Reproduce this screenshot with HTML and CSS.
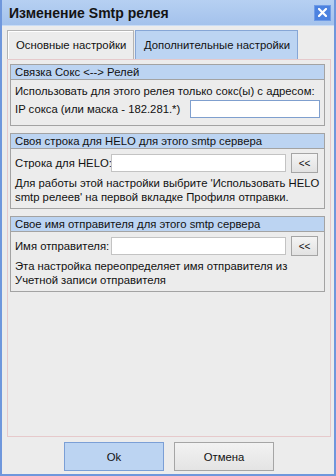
FILE: index.html
```html
<!DOCTYPE html>
<html lang="ru">
  <head>
    <meta charset="UTF-8" />
    <meta name="viewport" content="width=device-width, initial-scale=1.0" />
    <title>Изменение Smtp релея</title>
    <link rel="stylesheet" href="styles.css">
  </head>
  <body>
    <div class="window">
      <header class="titlebar">
        <h1>Изменение Smtp релея</h1>
        <button class="close" aria-label="Закрыть">
          <svg width="9" height="9" viewBox="0 0 9 9">
            <path d="M1 1 L8 8 M8 1 L1 8" stroke="#fff" stroke-width="2.2" stroke-linecap="square" />
          </svg>
        </button>
      </header>
      <main class="body">
        <nav class="tabs">
          <div class="tab">Основные настройки</div>
          <div class="tab active">Дополнительные настройки</div>
        </nav>
        <div class="panel">
          <section class="group first">
            <div class="group-head">Связка Сокс &lt;--&gt; Релей</div>
            <div class="group-body">
              <p>Использовать для этого релея только сокс(ы) с адресом:</p>
              <div class="row">
                <label class="wide">IP сокса (или маска - 182.281.*)</label>
                <input type="text" class="ip" />
              </div>
            </div>
          </section>

          <section class="group">
            <div class="group-head">Своя строка для HELO для этого smtp сервера</div>
            <div class="group-body">
              <div class="row">
                <label>Строка для HELO:</label>
                <input type="text" />
                <button class="small">&lt;&lt;</button>
              </div>
              <p class="note">Для работы этой настройки выбрите 'Использовать HELO <br />smtp релеев' на первой вкладке Профиля отправки.</p>
            </div>
          </section>

          <section class="group">
            <div class="group-head">Свое имя отправителя для этого smtp сервера</div>
            <div class="group-body">
              <div class="row">
                <label>Имя отправителя:</label>
                <input type="text" />
                <button class="small">&lt;&lt;</button>
              </div>
              <p class="note">Эта настройка переопределяет имя отправителя из <br />Учетной записи отправителя</p>
            </div>
          </section>
        </div>
        <footer class="actions">
          <button class="btn primary">Ok</button>
          <button class="btn">Отмена</button>
        </footer>
      </main>
    </div>
  </body>
</html>
```

FILE: styles.css
```css
* {
  box-sizing: border-box;
}

body {
  margin: 0;
  font-family: "Liberation Sans", Arial, sans-serif;
  font-size: 11.3px;
  color: #111;
}

.window {
  width: 336px;
  height: 476px;
  border: 2px solid #6f97dc;
  border-top: none;
  background: #ececec;
  display: flex;
  flex-direction: column;
}

.titlebar {
  height: 26px;
  display: flex;
  align-items: center;
  justify-content: space-between;
  padding: 0 3px 0 7px;
  background: linear-gradient(#b6d0f2, #a4c2ec);
  border-bottom: 1px solid #c9dcf5;
}

.titlebar h1 {
  margin: 0;
  font-size: 14px;
  font-weight: bold;
  color: #141414;
}

.close {
  width: 17px;
  height: 16px;
  padding: 0;
  border: 1px solid #6f9be6;
  background: #4c82e0;
  display: flex;
  align-items: center;
  justify-content: center;
}

.body {
  flex: 1;
  display: flex;
  flex-direction: column;
  padding: 4px 3px 0 5px;
}

.tabs {
  display: flex;
  gap: 1px;
  height: 29px;
}

.tab {
  display: flex;
  align-items: center;
  padding: 0 8px;
  white-space: nowrap;
  border: 1px solid #b4b4b4;
  border-bottom: none;
  background: #ececec;
  box-shadow: inset 1px 1px 0 #fff;
}

.tab:first-child {
  width: 127px;
}

.tab.active {
  width: 163px;
  background: #bcd4f2;
  border-color: #86a6d6;
  box-shadow: none;
}

.panel {
  height: 378px;
  border: 1px solid #e6c9cb;
  padding: 4px 5px 4px 2px;
  display: flex;
  flex-direction: column;
  gap: 7px;
}

.group {
  border: 1px solid #a3a3a3;
}

.group-head {
  height: 15px;
  line-height: 15px;
  padding-left: 4px;
  background: #bcd4f2;
  border-bottom: 1px solid #a3a3a3;
}

.group-body {
  padding: 4px 6px 4px 4px;
}

.group.first .group-body {
  padding-bottom: 6px;
}

.group-body p {
  margin: 0;
  line-height: 15px;
  white-space: nowrap;
}

.group-body .note {
  margin-top: 3px;
  line-height: 14px;
}

.row {
  display: flex;
  align-items: center;
  height: 20px;
}

.row label {
  width: 96px;
  flex: none;
  white-space: nowrap;
}

.row label.wide {
  width: 175px;
}

.row input {
  flex: 1;
  min-width: 0;
  height: 18px;
  border: 1px solid #c3c3c3;
  background: #fff;
  margin: 0;
}

.row input.ip {
  flex: none;
  width: 130px;
  border-color: #7f9fce;
}

.small {
  width: 27px;
  height: 20px;
  margin-left: 5px;
  padding: 0;
  border: 1px solid #a5a5a5;
  background: linear-gradient(#f4f4f4, #e2e2e2);
  font-family: "Liberation Sans", Arial, sans-serif;
  font-size: 10px;
  color: #111;
}

.actions {
  display: flex;
  justify-content: center;
  gap: 10px;
  padding-top: 5px;
}

.btn {
  width: 100px;
  height: 29px;
  border: 1px solid #a5a5a5;
  background: linear-gradient(#f2f2f2, #e4e4e4);
  font-family: "Liberation Sans", Arial, sans-serif;
  font-size: 11.3px;
  color: #111;
}

.btn.primary {
  background: #bcd4f2;
  border-color: #7b9fd6;
}
```
